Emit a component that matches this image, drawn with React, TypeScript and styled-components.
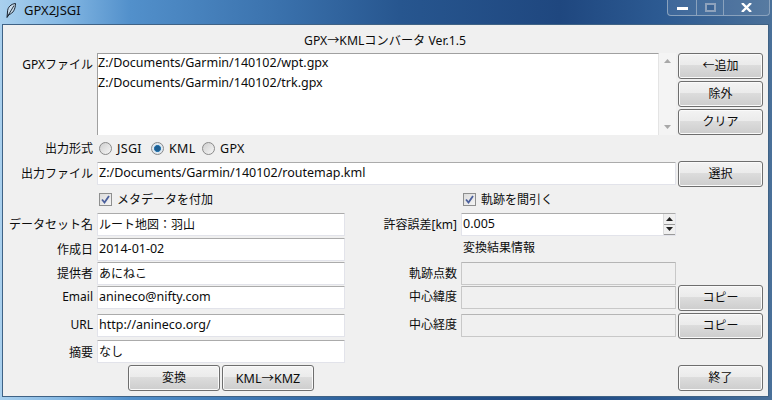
import React from "react";
import styled, { createGlobalStyle } from "styled-components";

const uiFont = `"Noto Sans", "Noto Sans CJK JP", sans-serif`;

const GlobalStyle = createGlobalStyle`
  html, body {
    margin: 0;
    padding: 0;
    background: #2c5a92;
  }
  * {
    box-sizing: border-box;
  }
`;

const Frame = styled.div`
  width: 772px;
  height: 400px;
  display: flex;
  flex-direction: column;
  padding: 0 3px 3px 2px;
  overflow: hidden;
  font-family: ${uiFont};
  font-size: 12.5px;
  color: #0c0c0c;
  background: linear-gradient(90deg, #a9d0ee 0, #86b9e4 60px, #5290cb 130px, #3a71ac 280px, #27568f 400px, #1f477f 560px, #2c5a92 660px, #4a7099 772px);
`;

const TitleBar = styled.div`
  height: 24px;
  flex: none;
  display: flex;
  align-items: flex-start;
  gap: 8px;
  padding: 3px 0 0 4px;
`;

const TitleText = styled.span`
  line-height: 15px;
  font-size: 13px;
  flex: 1;
`;

const Controls = styled.div`
  display: flex;
  height: 16px;
  margin: -3px -1px 0 0;
  border: 1px solid #8aa2bd;
  border-top: none;
  border-radius: 0 0 4px 4px;
  background: rgba(255, 255, 255, 0.08);
`;

const ControlButton = styled.div<{ $w: number }>`
  width: ${(p) => p.$w}px;
  display: flex;
  align-items: center;
  justify-content: center;
  & + & {
    border-left: 1px solid #8aa2bd;
  }
`;

const Client = styled.div`
  flex: 1;
  border: 1px solid #3f6285;
  background: #f0f0f0;
  display: grid;
  grid-template-columns: 92px 248px 116px 217px 85px;
  grid-template-rows: 28px 82px 26px 25px 26px 25px 24px 24px 28px 26px 26px 26px;
  padding-left: 2px;
`;

const Heading = styled.div`
  grid-column: 1 / -1;
  display: flex;
  align-items: flex-end;
  justify-content: center;
  padding: 0 0 4px 2px;
  font-size: 12.2px;
  line-height: 16px;
`;

const Label = styled.label<{ $col?: number; $top?: boolean }>`
  grid-column: ${(p) => p.$col ?? 1};
  text-align: right;
  white-space: nowrap;
  padding-right: 4px;
  font-size: 12px;
  line-height: 23px;
  height: 23px;
  align-self: ${(p) => (p.$top ? "start" : "center")};
`;

const ListArea = styled.div`
  grid-column: 2 / 5;
  display: flex;
`;

const ListBox = styled.div`
  width: 562px;
  height: 82px;
  background: #fff;
  border-top: 1px solid #a0a0a0;
  border-left: 1px solid #a0a0a0;
  border-right: 1px solid #e4e4e4;
  & > :first-child {
    margin-top: -1px;
  }
`;

const ListRow = styled.div`
  height: 19.5px;
  line-height: 19px;
  white-space: nowrap;
`;

const ScrollTrack = styled.div`
  width: 17px;
  height: 82px;
  display: flex;
  flex-direction: column;
  justify-content: space-between;
  align-items: center;
  padding: 6px 0;
  background: #f4f4f4;
`;

const ButtonStack = styled.div`
  grid-column: 5;
  display: flex;
  flex-direction: column;
  justify-content: space-between;
`;

const Button = styled.button<{ $w?: number; $col?: number; $size?: number }>`
  grid-column: ${(p) => p.$col ?? "auto"};
  width: ${(p) => p.$w ?? 85}px;
  height: 26px;
  flex: none;
  padding: 0 0 2px;
  font-family: inherit;
  font-size: ${(p) => p.$size ?? 12}px;
  color: #0c0c0c;
  border: 1px solid #6e6e6e;
  border-radius: 3px;
  box-shadow: inset 0 0 0 1px #fafafa;
  background: linear-gradient(180deg, #f3f3f3 0, #ebebeb 45%, #dcdcdc 48%, #cdcdcd 100%);
  white-space: nowrap;
`;

const RadioRow = styled.div`
  grid-column: 2 / -1;
  display: flex;
  align-items: center;
  gap: 5px;
`;

const Radio = styled.span<{ $on?: boolean }>`
  width: 13px;
  height: 13px;
  margin-left: 2px;
  border-radius: 50%;
  border: 1px solid #8a8a8a;
  background: ${(p) =>
    p.$on
      ? "radial-gradient(circle, #1f5f92 0 2.5px, #2d7cb5 3.2px, #dfe8f0 3.8px)"
      : "linear-gradient(135deg, #cfcfcf, #f6f6f6)"};
  flex: none;
`;

const RadioText = styled.span<{ $w: number }>`
  width: ${(p) => p.$w}px;
  letter-spacing: 0.3px;
`;

const Entry = styled.div<{ $col?: string; $disabled?: boolean; $size?: number }>`
  grid-column: ${(p) => p.$col ?? "2"};
  height: 23px;
  align-self: start;
  margin: 1px 0 0;
  display: flex;
  align-items: center;
  position: relative;
  padding: 0 0 2px 1px;
  white-space: nowrap;
  font-size: ${(p) => p.$size ?? 12.5}px;
  border: 1px solid #e2e3ea;
  border-top-color: #ababab;
  border-radius: 1px;
  background: ${(p) => (p.$disabled ? "#f0f0f0" : "#fff")};
  ${(p) => (p.$disabled ? "border-color: #b5b5b5 #c8c8c8 #c8c8c8 #c8c8c8;" : "")}
`;

// keeps the 2px gap between the entries and the button column
const EntryCell = styled.div<{ $col: string }>`
  grid-column: ${(p) => p.$col};
  display: grid;
  grid-template-columns: 1fr;
  align-content: start;
  padding-right: 2px;
`;

const CheckRow = styled.div<{ $col: number }>`
  grid-column: ${(p) => p.$col};
  display: flex;
  align-items: center;
  gap: 5px;
  padding-left: 2px;
  font-size: 12px;
`;

const Box = styled.span`
  width: 13px;
  height: 13px;
  flex: none;
  border: 1px solid #8e8f8f;
  background: linear-gradient(135deg, #dcdcdc, #f4f4f4);
  display: flex;
  align-items: center;
  justify-content: center;
`;

const SpinButtons = styled.div`
  position: absolute;
  right: 0;
  top: 0;
  bottom: 0;
  width: 12px;
  display: flex;
  flex-direction: column;
  background: #f0f0f0;
  border-left: 1px solid #dcdcdc;
`;

const SpinPart = styled.div`
  flex: 1;
  display: flex;
  align-items: center;
  justify-content: center;
  border-bottom: 1px solid #9a9a9a;
`;

const SubHead = styled.div`
  grid-column: 4;
  padding-left: 2px;
  font-size: 12px;
  line-height: 22px;
`;

const ButtonSlot = styled.div<{ $col: number }>`
  grid-column: ${(p) => p.$col};
  align-self: start;
`;

const BottomLeft = styled.div`
  grid-column: 1 / 4;
  display: flex;
  gap: 2px;
  padding-left: 123px;
`;

const Filler = styled.div<{ $col: string }>`
  grid-column: ${(p) => p.$col};
`;

const Arrow = ({ up, color = "#222" }: { up?: boolean; color?: string }) => (
  <svg width="7" height="4" viewBox="0 0 7 4">
    <path d={up ? "M0 4 L3.5 0 L7 4 Z" : "M0 0 L3.5 4 L7 0 Z"} fill={color} />
  </svg>
);

const Quill = () => (
  <svg width="10" height="15" viewBox="0 0 10 15">
    <path d="M9.5 0.5 C5 1 1.5 4 1.5 9 L1 14.5 L3 11.5 C7 10.5 9.5 6 9.5 0.5 Z" fill="#c9dcec" stroke="#16222f" strokeWidth="1" />
    <path d="M8 2.5 L1.5 13.5" stroke="#16222f" strokeWidth="0.9" />
  </svg>
);

const Check = () => (
  <svg width="9" height="9" viewBox="0 0 9 9">
    <path d="M1 4.5 L3.5 7.5 L8 1" fill="none" stroke="#4a5f9c" strokeWidth="1.8" />
  </svg>
);

const App = () => (
  <>
    <GlobalStyle />
    <Frame>
      <TitleBar>
        <Quill />
        <TitleText>GPX2JSGI</TitleText>
        <Controls>
          <ControlButton $w={28}>
            <svg width="11" height="4" viewBox="0 0 11 4">
              <rect width="11" height="3" y="1" fill="#fff" />
            </svg>
          </ControlButton>
          <ControlButton $w={27}>
            <svg width="11" height="9" viewBox="0 0 11 9">
              <rect x="1" y="1" width="9" height="7" fill="#3d6595" stroke="#8ea2bc" strokeWidth="2" />
            </svg>
          </ControlButton>
          <ControlButton $w={46}>
            <svg width="11" height="9" viewBox="0 0 11 9">
              <path d="M1 0 L10 9 M10 0 L1 9" stroke="#fff" strokeWidth="2.4" />
            </svg>
          </ControlButton>
        </Controls>
      </TitleBar>
      <Client>
        <Heading>GPX→KMLコンバータ Ver.1.5</Heading>

        <Label $top>GPXファイル</Label>
        <ListArea>
          <ListBox>
            <ListRow>Z:/Documents/Garmin/140102/wpt.gpx</ListRow>
            <ListRow>Z:/Documents/Garmin/140102/trk.gpx</ListRow>
          </ListBox>
          <ScrollTrack>
            <Arrow up color="#a8a8a8" />
            <Arrow color="#a8a8a8" />
          </ScrollTrack>
        </ListArea>
        <ButtonStack>
          <Button>←追加</Button>
          <Button>除外</Button>
          <Button>クリア</Button>
        </ButtonStack>

        <Label>出力形式</Label>
        <RadioRow>
          <Radio />
          <RadioText $w={27}>JSGI</RadioText>
          <Radio $on />
          <RadioText $w={26}>KML</RadioText>
          <Radio />
          <RadioText $w={26}>GPX</RadioText>
        </RadioRow>

        <Label>出力ファイル</Label>
        <EntryCell $col="2 / 5">
          <Entry $col="1">Z:/Documents/Garmin/140102/routemap.kml</Entry>
        </EntryCell>
        <Button $col={5}>選択</Button>

        <Filler $col="1" />
        <CheckRow $col={2}>
          <Box><Check /></Box>
          メタデータを付加
        </CheckRow>
        <Filler $col="3" />
        <CheckRow $col={4}>
          <Box><Check /></Box>
          軌跡を間引く
        </CheckRow>
        <Filler $col="5" />

        <Label>データセット名</Label>
        <Entry $size={12}>ルート地図：羽山</Entry>
        <Label $col={3}>許容誤差[km]</Label>
        <EntryCell $col="4">
          <Entry $col="1">
            0.005
            <SpinButtons>
              <SpinPart><Arrow up /></SpinPart>
              <SpinPart><Arrow /></SpinPart>
            </SpinButtons>
          </Entry>
        </EntryCell>
        <Filler $col="5" />

        <Label>作成日</Label>
        <Entry>2014-01-02</Entry>
        <Filler $col="3" />
        <SubHead>変換結果情報</SubHead>
        <Filler $col="5" />

        <Label>提供者</Label>
        <Entry $size={12}>あにねこ</Entry>
        <Label $col={3}>軌跡点数</Label>
        <EntryCell $col="4">
          <Entry $col="1" $disabled />
        </EntryCell>
        <Filler $col="5" />

        <Label $top>Email</Label>
        <Entry>anineco@nifty.com</Entry>
        <Label $col={3} $top>中心緯度</Label>
        <EntryCell $col="4">
          <Entry $col="1" $disabled />
        </EntryCell>
        <ButtonSlot $col={5}><Button>コピー</Button></ButtonSlot>

        <Label $top>URL</Label>
        <Entry>http://anineco.org/</Entry>
        <Label $col={3} $top>中心経度</Label>
        <EntryCell $col="4">
          <Entry $col="1" $disabled />
        </EntryCell>
        <ButtonSlot $col={5}><Button>コピー</Button></ButtonSlot>

        <Label>摘要</Label>
        <Entry $size={12}>なし</Entry>
        <Filler $col="3 / -1" />

        <BottomLeft>
          <Button $w={92}>変換</Button>
          <Button $w={92} $size={12.5}>KML→KMZ</Button>
        </BottomLeft>
        <Filler $col="4" />
        <ButtonSlot $col={5}><Button>終了</Button></ButtonSlot>
      </Client>
    </Frame>
  </>
);

export default App;
